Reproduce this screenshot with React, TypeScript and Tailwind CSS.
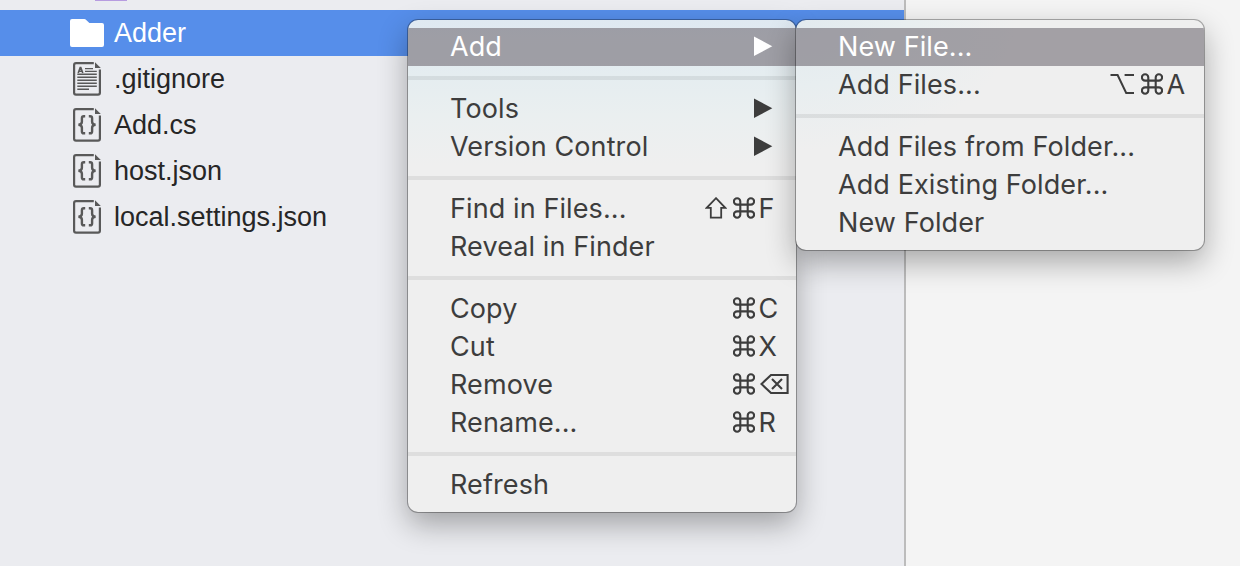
import type { ReactNode } from "react";

function FolderIcon() {
  return (
    <svg width="34" height="28" viewBox="0 0 34 28" className="block">
      <path d="M2 0H14.2Q15.4 0 16.2 .9L19.4 4H32Q34 4 34 6V26Q34 28 32 28H2Q0 28 0 26V2Q0 0 2 0Z" fill="#fff" />
    </svg>
  );
}

function PageOutline({ children }: { children: ReactNode }) {
  return (
    <svg width="28" height="34" viewBox="0 0 28 34" className="block">
      <path d="M20.8 1.2H3Q1.1 1.2 1.1 3V30.8Q1.1 32.6 3 32.6H25Q26.9 32.6 26.9 30.8V7.4" fill="none" stroke="#595959" strokeWidth="2.2" />
      <path d="M22 .3V6H27.8Z" fill="#595959" />
      {children}
    </svg>
  );
}

function TextFileIcon() {
  return (
    <PageOutline>
      <path d="M5.2 11L7.2 5.6H7.8L9.8 11M6 9.3H9" fill="none" stroke="#595959" strokeWidth="1.6" />
      <path d="M12 6.6H20M12 9.4H23.8M4.3 12.3H23.8M4.3 15.3H23.8M4.3 18.3H23.8M4.3 21.3H23.8M4.3 24.3H23.8M4.3 27.2H16" stroke="#595959" strokeWidth="1.4" />
    </PageOutline>
  );
}

function CodeFileIcon() {
  return (
    <PageOutline>
      <path
        d="M12.2 8.3H10.8Q8.9 8.3 8.9 10.2V13.8Q8.9 16.6 5.4 16.8Q8.9 17 8.9 19.8V23.4Q8.9 25.3 10.8 25.3H12.2M15.8 8.3H17.2Q19.1 8.3 19.1 10.2V13.8Q19.1 16.6 22.6 16.8Q19.1 17 19.1 19.8V23.4Q19.1 25.3 17.2 25.3H15.8"
        fill="none"
        stroke="#595959"
        strokeWidth="2.4"
      />
    </PageOutline>
  );
}

function FileRow({ icon, name, selected = false }: { icon: ReactNode; name: string; selected?: boolean }) {
  return (
    <li className={`flex h-[46px] items-center pl-[70px] ${selected ? "bg-[#568eea] text-white" : "text-[#262626]"}`}>
      <span className="flex w-[34px] justify-center">{icon}</span>
      <span className="ml-[10px] text-[27px] leading-[46px]">{name}</span>
    </li>
  );
}

function Arrow() {
  return (
    <svg width="19" height="20" viewBox="0 0 19 20" className="mr-[23px] mb-[2px] block">
      <path d="M0 .5L18.3 10.2L0 20Z" fill="currentColor" />
    </svg>
  );
}

function CommandGlyph() {
  return (
    <svg width="22" height="22" viewBox="0 0 22 22" role="img" aria-label="Command" className="block">
      <path
        d="M7.3 4.4A3.2 3.2 0 1 0 4.1 7.6H17.9A3.2 3.2 0 1 0 14.7 4.4V17.6A3.2 3.2 0 1 0 17.9 14.4H4.1A3.2 3.2 0 1 0 7.3 17.6Z"
        fill="none"
        stroke="currentColor"
        strokeWidth="2.1"
      />
    </svg>
  );
}

function ShiftGlyph() {
  return (
    <svg width="22" height="22" viewBox="0 0 22 22" role="img" aria-label="Shift" className="block">
      <path d="M11 1.2L20.3 10.9H16.2V20.6H5.8V10.9H1.7Z" fill="none" stroke="currentColor" strokeWidth="1.8" />
    </svg>
  );
}

function OptionGlyph() {
  return (
    <svg width="25" height="22" viewBox="0 0 25 22" role="img" aria-label="Option" className="block">
      <path d="M.5 2H7.6L16.2 20H24M14.6 2H24" fill="none" stroke="currentColor" strokeWidth="2" />
    </svg>
  );
}

function DeleteGlyph() {
  return (
    <svg width="29" height="22" viewBox="0 0 29 22" role="img" aria-label="Delete" className="block">
      <path d="M1.5 11L11 2H27.6V20H11ZM12 6L22 16M22 6L12 16" fill="none" stroke="currentColor" strokeWidth="2.1" />
    </svg>
  );
}

function Shortcut({ modifier, children }: { modifier?: ReactNode; children: ReactNode }) {
  return (
    <span className="flex items-center">
      {modifier && <span className="mb-[2px]">{modifier}</span>}
      <span className="mb-[2px] ml-[6px]"><CommandGlyph /></span>
      <span className="ml-[3.5px] w-[37.5px]">{children}</span>
    </span>
  );
}

function MenuItem({ label, active = false, children }: { label: string; active?: boolean; children?: ReactNode }) {
  return (
    <li
      className={`flex h-[38px] items-center justify-between pl-[42px] text-[27px] leading-[38px] tracking-[0.1px] whitespace-nowrap ${
        active ? "bg-[#79747d]/65 text-white" : "text-[#3d3d3d]"
      }`}
    >
      <span>{label}</span>
      {children}
    </li>
  );
}

function Separator() {
  return <li className="my-[10px] h-1 bg-black/7" />;
}

export default function App() {
  return (
    <div className="relative flex h-[566px] w-[1240px] overflow-hidden bg-[#f4f4f4] font-['Inter','Liberation_Sans',sans-serif]">
      <aside className="w-[906px] border-r-2 border-[#bcbcbc] bg-[#ebecf0]">
        <div className="h-[10px] pl-[95px]">
          <div className="h-px w-8 bg-[#b79ce0]" />
        </div>
        <ul className="font-['Liberation_Sans',sans-serif]">
          <FileRow selected icon={<FolderIcon />} name="Adder" />
          <FileRow icon={<TextFileIcon />} name=".gitignore" />
          <FileRow icon={<CodeFileIcon />} name="Add.cs" />
          <FileRow icon={<CodeFileIcon />} name="host.json" />
          <FileRow icon={<CodeFileIcon />} name="local.settings.json" />
        </ul>
      </aside>

      <ul className="absolute top-[20px] left-[408px] w-[388px] overflow-hidden rounded-[10px] bg-[#efefef] bg-[linear-gradient(to_bottom,#dfe9f2_0px,#e5edf0_55px,#eaeff0_95px,#efefef_145px)] py-2 shadow-[0_0_0_1px_rgba(0,0,0,0.3),0_12px_30px_rgba(0,0,0,0.32)]">
        <MenuItem label="Add" active><Arrow /></MenuItem>
        <Separator />
        <MenuItem label="Tools"><Arrow /></MenuItem>
        <MenuItem label="Version Control"><Arrow /></MenuItem>
        <Separator />
        <MenuItem label="Find in Files..."><Shortcut modifier={<ShiftGlyph />}>F</Shortcut></MenuItem>
        <MenuItem label="Reveal in Finder" />
        <Separator />
        <MenuItem label="Copy"><Shortcut>C</Shortcut></MenuItem>
        <MenuItem label="Cut"><Shortcut>X</Shortcut></MenuItem>
        <MenuItem label="Remove"><Shortcut><span className="mb-[2px] ml-[1.5px] block"><DeleteGlyph /></span></Shortcut></MenuItem>
        <MenuItem label="Rename..."><Shortcut>R</Shortcut></MenuItem>
        <Separator />
        <MenuItem label="Refresh" />
      </ul>

      <ul className="absolute top-[20px] left-[796px] w-[408px] overflow-hidden rounded-[10px] bg-[#efefef] bg-[radial-gradient(ellipse_220px_130px_at_0_0,#e2eaef,#e8eef0_50%,#efefef)] py-2 shadow-[0_0_0_1px_rgba(0,0,0,0.3),0_12px_30px_rgba(0,0,0,0.32)]">
        <MenuItem label="New File..." active />
        <MenuItem label="Add Files..."><Shortcut modifier={<OptionGlyph />}>A</Shortcut></MenuItem>
        <Separator />
        <MenuItem label="Add Files from Folder..." />
        <MenuItem label="Add Existing Folder..." />
        <MenuItem label="New Folder" />
      </ul>
    </div>
  );
}
